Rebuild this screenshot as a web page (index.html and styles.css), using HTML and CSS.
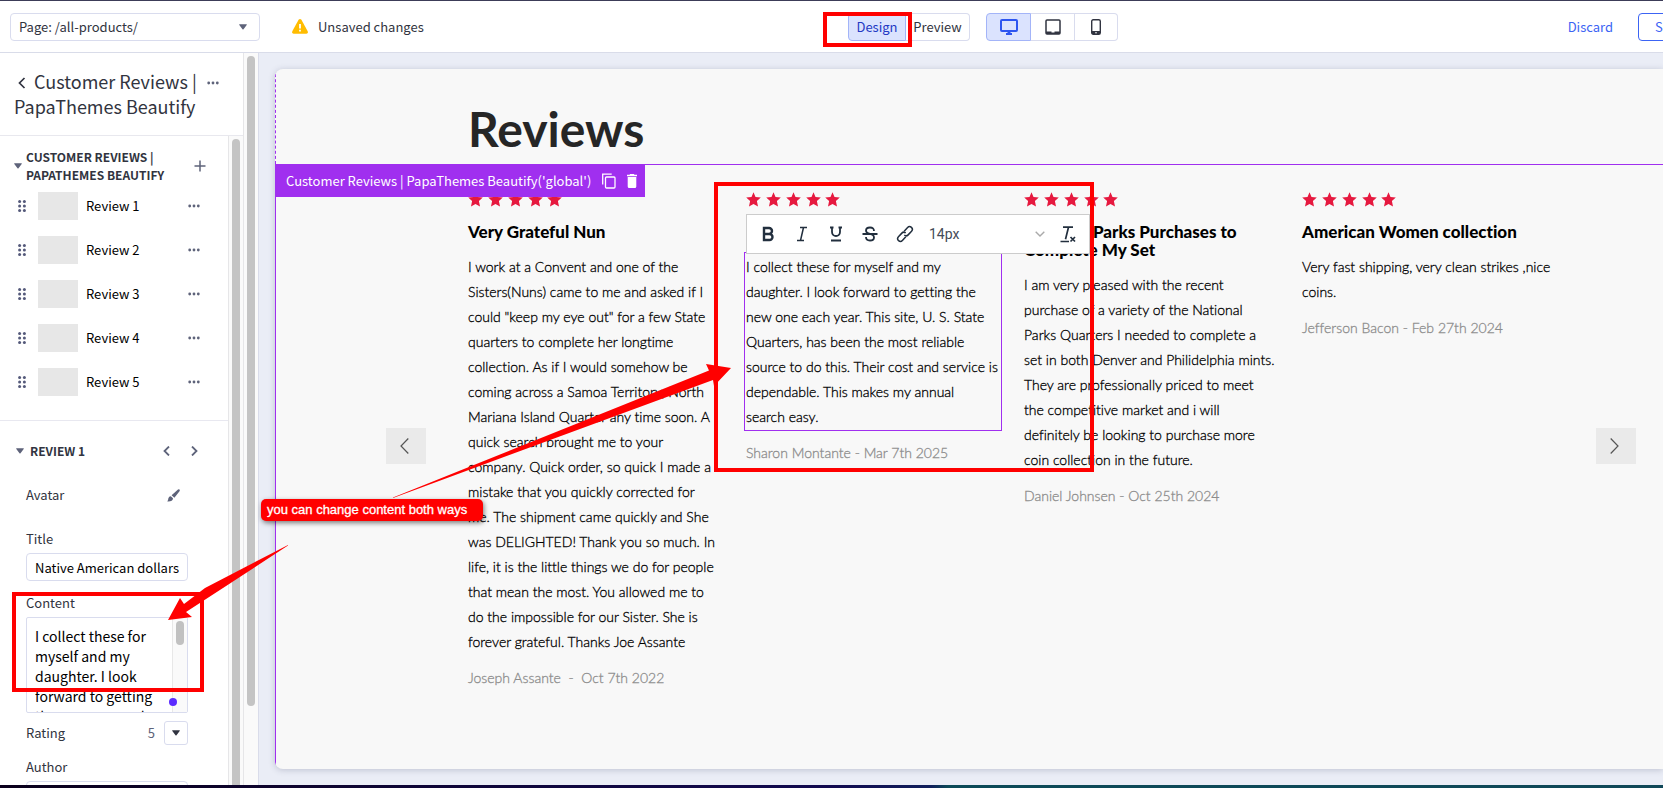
FILE: index.html
```html
<!DOCTYPE html>
<html lang="en">
<head>
<meta charset="utf-8">
<title>Page Builder</title>
<link rel="stylesheet" href="styles.css">
</head>
<body>
<svg class="defs" aria-hidden="true">
  <symbol id="star" viewBox="0 0 15 15"><path d="M7.500 0.300 9.500 5.000 14.800 5.600 10.900 9 12 14.500 7.500 12 3 14.500 4.100 9 .2 5.600 5.500 5z"/></symbol>
  <symbol id="dots" viewBox="0 0 12 4"><circle cx="1.700" cy="2" r="1.400"/><circle cx="6" cy="2" r="1.400"/><circle cx="10.300" cy="2" r="1.400"/></symbol>
  <symbol id="grip" viewBox="0 0 8 12"><circle cx="1.600" cy="1.500" r="1.500"/><circle cx="6.400" cy="1.500" r="1.500"/><circle cx="1.600" cy="6" r="1.500"/><circle cx="6.400" cy="6" r="1.500"/><circle cx="1.600" cy="10.500" r="1.500"/><circle cx="6.400" cy="10.500" r="1.500"/></symbol>
  <symbol id="caret" viewBox="0 0 8 6"><path d="M.4.300h7.200Q8 .6 7.700 1L4.500 5.300Q4 5.800 3.500 5.300L.3 1Q0 .6.400.300z"/></symbol>
  <symbol id="stars" viewBox="0 0 95 15"><use href="#star" width="15" height="15"/><use href="#star" x="20" width="15" height="15"/><use href="#star" x="40" width="15" height="15"/><use href="#star" x="60" width="15" height="15"/><use href="#star" x="79" width="15" height="15"/></symbol>
</svg>

<div class="app">
  <header class="topbar">
    <div class="topbar-left">
      <div class="page-select">
        <select aria-label="Page"><option>Page: /all-products/</option></select>
        <svg class="caret"><use href="#caret"/></svg>
      </div>
      <p class="unsaved">
        <svg width="16" height="15" viewBox="0 0 16 15"><path d="M6.600.8Q8-.8 9.400.8L15.700 12.200Q16.300 14.500 14.400 14.700H1.600Q-.3 14.500.3 12.200z" fill="#ffbc00"/><path d="M7.100 5h1.800v4.500H7.100zM7.100 10.700h1.800v1.700H7.100z" fill="#fff"/></svg>
        Unsaved changes
      </p>
    </div>
    <div class="segmented modes">
      <button class="active">Design</button><button>Preview</button>
    </div>
    <div class="segmented devices">
      <button class="active" aria-label="Desktop"><svg width="18" height="16" viewBox="0 0 18 16"><rect x="1" y="1" width="16" height="11" rx="1" fill="none" stroke="currentColor" stroke-width="2"/><path d="M7.500 12h3v2H12v2H6v-2h1.500z" fill="currentColor"/></svg></button>
      <button aria-label="Tablet"><svg width="16" height="16" viewBox="0 0 16 16"><rect x="1" y="1" width="14" height="14" rx="1" fill="none" stroke="currentColor" stroke-width="1.500"/><path d="M1 12.500h5.500v1h3v-1H15V15H1z" fill="currentColor"/></svg></button>
      <button aria-label="Mobile"><svg width="10" height="16" viewBox="0 0 10 16"><rect x=".7" y=".7" width="8.600" height="14.600" rx="1.500" fill="none" stroke="currentColor" stroke-width="1.400"/><path d="M1 12h8v3H1z" fill="currentColor"/><circle cx="5" cy="13.700" r=".8" fill="#fff"/></svg></button>
    </div>
    <div class="topbar-right">
      <button class="discard">Discard</button>
      <button class="save">Save</button>
    </div>
  </header>

  <div class="workspace">
    <aside class="sidebar">
      <div class="sidebar-body">
        <div class="panel-head">
          <h1><button class="icon-btn back" aria-label="Back"><svg width="8" height="12" viewBox="0 0 8 12"><path d="M6.500 1 1.500 6l5 5" fill="none" stroke="currentColor" stroke-width="1.700"/></svg></button>Customer Reviews |<br>PapaThemes Beautify</h1>
          <button class="icon-btn" aria-label="More"><svg class="dots"><use href="#dots"/></svg></button>
        </div>
        <div class="panel-scroll">
          <div class="panel">
            <section class="list">
              <div class="list-head">
                <svg class="caret"><use href="#caret"/></svg>
                <h2>CUSTOMER REVIEWS |<br>PAPATHEMES BEAUTIFY</h2>
                <button class="icon-btn" aria-label="Add"><svg width="12" height="12" viewBox="0 0 12 12"><path d="M6 .5v11M.5 6h11" stroke="currentColor" stroke-width="1.500"/></svg></button>
              </div>
              <ul>
                <li><svg class="grip"><use href="#grip"/></svg><span class="thumb"></span><span class="name">Review 1</span><button class="icon-btn" aria-label="More"><svg class="dots"><use href="#dots"/></svg></button></li>
                <li><svg class="grip"><use href="#grip"/></svg><span class="thumb"></span><span class="name">Review 2</span><button class="icon-btn" aria-label="More"><svg class="dots"><use href="#dots"/></svg></button></li>
                <li><svg class="grip"><use href="#grip"/></svg><span class="thumb"></span><span class="name">Review 3</span><button class="icon-btn" aria-label="More"><svg class="dots"><use href="#dots"/></svg></button></li>
                <li><svg class="grip"><use href="#grip"/></svg><span class="thumb"></span><span class="name">Review 4</span><button class="icon-btn" aria-label="More"><svg class="dots"><use href="#dots"/></svg></button></li>
                <li><svg class="grip"><use href="#grip"/></svg><span class="thumb"></span><span class="name">Review 5</span><button class="icon-btn" aria-label="More"><svg class="dots"><use href="#dots"/></svg></button></li>
              </ul>
            </section>
            <section class="details">
              <div class="details-head">
                <svg class="caret"><use href="#caret"/></svg>
                <h2>REVIEW 1</h2>
                <button class="icon-btn" aria-label="Previous"><svg width="7" height="10" viewBox="0 0 7 10"><path d="M6 .5 1.500 5 6 9.500" fill="none" stroke="currentColor" stroke-width="1.800"/></svg></button>
                <button class="icon-btn" aria-label="Next"><svg width="7" height="10" viewBox="0 0 7 10"><path d="M1 .5 5.500 5 1 9.500" fill="none" stroke="currentColor" stroke-width="1.800"/></svg></button>
              </div>
              <div class="row avatar">
                <span>Avatar</span>
                <button class="icon-btn" aria-label="Edit avatar"><svg width="13" height="13" viewBox="0 0 13 13"><path d="M11 .4Q13.200-.2 12.700 1.900L7.400 8.700 4.600 6.200zM3.800 7.200 6 9.300Q5.800 12.800.3 12.500 1.300 11 1.300 9.500 1.800 7.200 3.800 7.200z" fill="currentColor"/></svg></button>
              </div>
              <label for="title">Title</label>
              <input id="title" class="field" type="text" value="Native American dollars">
              <label for="content">Content</label>
              <div class="textarea-wrap">
                <textarea id="content" class="field">I collect these for
myself and my
daughter. I look
forward to getting
the new one each
year.</textarea>
                <span class="mini-track"><span></span></span>
                <span class="marker"></span>
              </div>
              <div class="row rating">
                <span>Rating</span><span class="value">5</span>
                <button class="rating-btn" aria-label="Choose rating"><svg class="caret"><use href="#caret"/></svg></button>
              </div>
              <label for="author">Author</label>
              <input id="author" class="field" type="text">
            </section>
          </div>
          <div class="track inner"><span></span></div>
        </div>
      </div>
      <div class="track outer"><span></span></div>
    </aside>

    <main class="canvas">
      <div class="frame">
        <div class="page-heading"><h2>Reviews</h2></div>
        <section class="widget">
          <div class="widget-badge">
            <span>Customer Reviews | PapaThemes Beautify('global')</span>
            <button aria-label="Duplicate"><svg width="14" height="16" viewBox="0 0 14 16"><path d="M.7 11.500V1.200h9" fill="none" stroke="currentColor" stroke-width="1.300"/><rect x="3.500" y="4" width="9.500" height="11" rx="1" fill="none" stroke="currentColor" stroke-width="1.300"/></svg></button>
            <button aria-label="Delete"><svg width="10" height="14" viewBox="0 0 10 14"><path d="M0 .8h2.500L3.200 0h3.600l.7.8H10v1.400H0zM.7 3h8.600v9.500Q9.300 14 7.800 14H2.200Q.7 14 .7 12.500z" fill="currentColor"/></svg></button>
          </div>
          <button class="slide-btn" aria-label="Previous reviews"><svg width="9" height="16" viewBox="0 0 9 16"><path d="M8.300.5 1 8l7.300 7.500" fill="none" stroke="currentColor" stroke-width="1.200"/></svg></button>
          <div class="reviews">
            <article>
              <svg class="stars"><use href="#stars"/></svg>
              <h3>Very Grateful Nun</h3>
              <p>I work at a Convent and one of the<br>Sisters(Nuns) came to me and asked if I<br>could "keep my eye out" for a few State<br>quarters to complete her longtime<br>collection. As if I would somehow be<br>coming across a Samoa Territory, North<br>Mariana Island Quarter any time soon. A<br>quick search brought me to your<br>company. Quick order, so quick I made a<br>mistake that you quickly corrected for<br>me. The shipment came quickly and She<br>was DELIGHTED! Thank you so much. In<br>life, it is the little things we do for people<br>that mean the most. You allowed me to<br>do the impossible for our Sister. She is<br>forever grateful. Thanks Joe Assante</p>
              <p class="by">Joseph Assante &nbsp;-&nbsp; Oct 7th 2022</p>
            </article>
            <article class="editing">
              <svg class="stars"><use href="#stars"/></svg>
              <h3>Native American dollars</h3>
              <div class="toolbar">
                <button aria-label="Bold"><svg width="16" height="16" viewBox="0 0 16 16"><path d="M4 2h5a3 3 0 0 1 0 6H4zM4 8h5.500a3 3 0 0 1 0 6H4z" fill="none" stroke="currentColor" stroke-width="2.400"/></svg></button>
                <button aria-label="Italic"><svg width="16" height="16" viewBox="0 0 16 16"><path d="M6 1.500h7M3 14.500h7M9.500 1.500l-3 13" fill="none" stroke="currentColor" stroke-width="1.500"/></svg></button>
                <button aria-label="Underline"><svg width="16" height="16" viewBox="0 0 16 16"><path d="M2 1.500h3.500M10.500 1.500H14M4 1.500V6a4 4 0 0 0 8 0V1.500M3 14.500h10" fill="none" stroke="currentColor" stroke-width="1.800"/></svg></button>
                <button aria-label="Strikethrough"><svg width="16" height="16" viewBox="0 0 16 16"><path d="M12 5Q12 1.500 8 1.500T4 4.500Q4 7 8 7.800T12 11.500Q12 14.500 8 14.500T4 11M.5 8h15" fill="none" stroke="currentColor" stroke-width="1.800"/></svg></button>
                <button aria-label="Link"><svg width="18" height="18" viewBox="0 0 18 18"><g transform="rotate(-47 9 9)" fill="none" stroke="currentColor" stroke-width="1.500"><path d="M7.500 11.500H2.500a2.700 2.700 0 0 1 0-5.400h5a2.700 2.700 0 0 1 2.700 2.700"/><path d="M10.500 6.500h5a2.700 2.700 0 0 1 0 5.400h-5a2.700 2.700 0 0 1-2.700-2.700"/></g></svg></button>
                <div class="size"><select aria-label="Font size"><option>14px</option></select><svg width="10" height="6" viewBox="0 0 10 6"><path d="m.7.700 4.300 4.300L9.300.7" fill="none" stroke="#aaa" stroke-width="1.400"/></svg></div>
                <button aria-label="Clear formatting"><svg width="16" height="17" viewBox="0 0 16 17"><path d="M3 1.200h10M8.500 1.200l-3 12M.5 15.500H9M10.500 11l4.500 4.500M15 11l-4.500 4.500" fill="none" stroke="currentColor" stroke-width="1.700"/></svg></button>
              </div>
              <p>I collect these for myself and my<br>daughter. I look forward to getting the<br>new one each year. This site, U. S. State<br>Quarters, has been the most reliable<br>source to do this. Their cost and service is<br>dependable. This makes my annual<br>search easy.</p>
              <p class="by">Sharon Montante - Mar 7th 2025</p>
            </article>
            <article>
              <svg class="stars"><use href="#stars"/></svg>
              <h3>National Parks Purchases to<br>Complete My Set</h3>
              <p>I am very pleased with the recent<br>purchase of a variety of the National<br>Parks Quarters I needed to complete a<br>set in both Denver and Philidelphia mints.<br>They are professionally priced to meet<br>the competitive market and i will<br>definitely be looking to purchase more<br>coin collection in the future.</p>
              <p class="by">Daniel Johnsen - Oct 25th 2024</p>
            </article>
            <article>
              <svg class="stars"><use href="#stars"/></svg>
              <h3>American Women collection</h3>
              <p>Very fast shipping, very clean strikes ,nice<br>coins.</p>
              <p class="by">Jefferson Bacon - Feb 27th 2024</p>
            </article>
          </div>
          <button class="slide-btn" aria-label="Next reviews"><svg width="9" height="16" viewBox="0 0 9 16"><path d="M.7.500 8 8 .7 15.500" fill="none" stroke="currentColor" stroke-width="1.200"/></svg></button>
        </section>
      </div>
    </main>
  </div>
  <div class="desktop-edge"></div>

  <svg class="markup" width="1100" height="700" viewBox="0 0 1100 700">
    <g fill="none" stroke="#f00" stroke-width="4">
      <rect x="825" y="14" width="85" height="31"/>
      <rect x="716" y="184" width="376" height="286"/>
      <rect x="14" y="594" width="188" height="96"/>
    </g>
    <g fill="#f00">
      <path d="M393 497.500 709 370.500 706 364 731 368 714 386 713 380 393 498z"/>
      <path d="M288 545 205 588 184 604 180 598 168 620 192 617 186 612 223 588 288 545.500z"/>
    </g>
  </svg>
  <div class="callout">you can change content both ways</div>
</div>
</body>
</html>
```

FILE: styles.css
```css
* { box-sizing: border-box; }
body {
  margin: 0;
  font: 13px/20px "Noto Sans CJK SC", "Noto Sans", sans-serif;
  color: #313440;
}
h1, h2, h3, p, ul { margin: 0; padding: 0; }
button, input, select, textarea { font: inherit; color: inherit; margin: 0; }
button { background: none; border: 0; padding: 0; }
svg { display: block; }
.defs { position: absolute; width: 0; height: 0; }

.app {
  position: relative;
  display: flex;
  flex-direction: column;
  height: 100vh;
  overflow: hidden;
  border-top: 1px solid #3c3c58;
}

/* Top bar */
.topbar {
  display: flex;
  align-items: center;
  height: 52px;
  padding-left: 10px;
  border-bottom: 1px solid #d9dce9;
  background: #fff;
  overflow: hidden;
}
.topbar-left { display: flex; align-items: center; flex: 1; gap: 32px; }
.page-select { display: grid; width: 250px; align-items: center; }
.page-select > * { grid-area: 1 / 1; }
.page-select select {
  appearance: none;
  height: 28px;
  padding: 0 8px;
  border: 1px solid #d9dcee;
  border-radius: 4px;
  background: #fff;
}
.page-select .caret { justify-self: end; margin-right: 13px; }
.caret { width: 8px; height: 6px; fill: #5e637a; flex: none; }
.unsaved { display: flex; align-items: center; gap: 10px; }
.segmented { display: flex; height: 28px; }
.segmented button {
  display: flex;
  align-items: center;
  justify-content: center;
  border: 1px solid #d9dcee;
  border-left-width: 0;
}
.segmented button:first-child { border-radius: 4px 0 0 4px; }
.segmented button:last-child { border-radius: 0 4px 4px 0; }
.segmented .active { background: #dbe3fe; border: 1px solid #a3b4f8; color: #2439c4; }
.modes { margin-right: 16px; }
.modes button { width: 64px; }
.modes .active { width: 58px; }
.devices button { width: 43px; }
.devices button:nth-child(2) { width: 44px; }
.devices .active { width: 45px; color: #2d55f0; }
.topbar-right {
  display: flex;
  align-items: center;
  justify-content: flex-end;
  width: 592px;
  margin-right: -47px;
  gap: 25px;
  color: #3c64f4;
}
.save { width: 72px; height: 28px; border: 1px solid #3c64f4; border-radius: 4px; padding-left: 16px; text-align: left; }

/* Sidebar */
.workspace { display: flex; flex: 1; min-height: 0; }
.sidebar { display: flex; width: 259px; flex: none; background: #fff; border-right: 1px solid #d9dcea; }
.sidebar-body { flex: 1; display: flex; flex-direction: column; min-height: 0; }
.icon-btn { display: flex; color: #5e637a; flex: none; }
.dots { width: 12px; height: 4px; fill: #5e637a; }
.grip { width: 8px; height: 12px; fill: #54597a; }
.panel-head {
  display: flex;
  height: 82px;
  padding: 16px 24px 0 14px;
  justify-content: space-between;
  white-space: nowrap;
}
.panel-head h1 { font-size: 18px; line-height: 25px; font-weight: 400; }
.panel-head > .icon-btn { margin-top: 12px; }
.back { display: inline-flex; margin: 0 8px 0 4px; color: #313440; }
.panel-scroll { display: flex; flex: 1; min-height: 0; border-top: 1px solid #e8e8ee; }
.panel { flex: 1; min-width: 0; overflow: hidden; }
.panel h2 { font-size: 12px; line-height: 18px; font-weight: 700; white-space: nowrap; }
.track { width: 15px; flex: none; border-left: 1px solid #e6e6e8; background: #fafafa; padding: 3px 3px 0; }
.track span { display: block; width: 8px; border-radius: 4px; background: #c4c4c4; }
.track.inner span { height: 100%; border-radius: 4px 4px 0 0; }
.track.outer span { height: 650px; }
.list { height: 285px; padding: 12px 0 0; border-bottom: 1px solid #e8e8f0; }
.list-head { display: flex; align-items: center; gap: 4px; padding: 0 22px 0 14px; height: 36px; }
.list-head h2 { flex: 1; }
ul { list-style: none; }
li { display: flex; align-items: center; height: 44px; padding: 0 28px 0 18px; color: #000; }
li .thumb { width: 40px; height: 28px; margin: 0 8px 0 12px; background: #e7e7e7; }
li .name { flex: 1; }
.details { padding: 20px 40px 0 26px; }
.details-head { display: flex; align-items: center; height: 20px; margin: 0 -10px; gap: 21px; }
.details-head .caret { margin-right: -15px; }
.details-head h2 { flex: 1; }
.details label { display: block; line-height: 20px; }
.row { display: flex; align-items: center; justify-content: space-between; }
.avatar { height: 20px; margin: 24px 0; padding-right: 8px; }
.field { display: block; width: 100%; border: 1px solid #d9dcee; border-radius: 4px; background: #fff; color: #000; padding: 0 8px; outline: 0; }
input.field { height: 28px; margin: 4px 0 12px; }
.textarea-wrap { position: relative; margin: 4px 0 8px; }
textarea.field { height: 96px; padding: 8px 8px 0; font-size: 14px; resize: none; overflow: hidden; white-space: pre; border-radius: 2px; }
.mini-track { position: absolute; top: 1px; right: 1px; bottom: 1px; width: 15px; padding: 3px; border-left: 1px solid #e8e8e8; background: #fafafa; }
.mini-track span { display: block; width: 8px; height: 24px; border-radius: 4px; background: #c1c1c1; }
.marker { position: absolute; right: 11px; bottom: 7px; width: 8px; height: 8px; border-radius: 50%; background: #5b2bff; }
.rating { height: 24px; margin-bottom: 12px; }
.rating .value { margin: 0 9px 0 auto; color: #5e637a; }
.rating-btn { display: flex; align-items: center; justify-content: center; width: 24px; height: 24px; border: 1px solid #d9dcee; border-radius: 3px; }
.rating-btn .caret { fill: #313440; }

/* Canvas */
.canvas { flex: 1; min-width: 0; padding: 16px 0 16px 16px; background: #eaedf6; }
.frame {
  display: flex;
  flex-direction: column;
  height: 100%;
  border-radius: 8px 0 0 8px;
  background: #f8f8f8;
  box-shadow: 0 1px 6px rgba(60, 64, 100, .25);
  overflow: hidden;
  color: #000;
  font-family: Lato, sans-serif;
  font-variant-ligatures: none;
}
.page-heading { height: 95px; padding: 30px 0 0 192px; border-left: 1px dashed #a02fef; }
.page-heading h2 { font-size: 48px; line-height: 60px; font-weight: 700; color: #262626; }
.widget {
  position: relative;
  display: flex;
  align-items: flex-start;
  flex: 1;
  padding: 27px 27px 0 110px;
  border-top: 1px solid #a02fef;
  border-left: 1px solid #a02fef;
}
.widget-badge {
  position: absolute;
  z-index: 1;
  top: 0;
  left: 0;
  display: flex;
  align-items: center;
  height: 32px;
  padding: 0 8px 0 10px;
  gap: 11px;
  background: #a02fef;
  color: #fff;
  font: 13px/20px "Noto Sans CJK SC", "Noto Sans", sans-serif;
  white-space: nowrap;
}
.slide-btn {
  display: flex;
  align-items: center;
  justify-content: center;
  width: 40px;
  height: 36px;
  margin-top: 236px;
  padding-right: 3px;
  flex: none;
  background: #eaeaea;
  color: #555;
}
.reviews { display: grid; grid-template-columns: repeat(4, minmax(0, 1fr)); gap: 24px; flex: 1; margin: 0 40px 0 42px; }
article { position: relative; white-space: nowrap; }
.stars { width: 95px; height: 15px; fill: #e6193f; }
h3 { margin: 16px 0 13px; font-size: 17px; line-height: 18px; font-weight: 900; }
article p { font-size: 14px; line-height: 25px; font-weight: 300; -webkit-text-stroke: 0.3px currentColor; }
article .by { margin-top: 11px; color: #8c8c8c; }
.editing p:not(.by) { outline: 1px solid #a02fef; outline-offset: 1px; }
.toolbar {
  position: absolute;
  z-index: 1;
  top: 22px;
  left: 0;
  display: flex;
  align-items: center;
  gap: 18px;
  width: 344px;
  height: 40px;
  padding: 0 13px;
  border: 1px solid #ccc;
  background: #fff;
  color: #222f3e;
}
.toolbar button { flex: none; }
.size { display: grid; flex: 1; align-items: center; margin: 0 -3px; }
.size > * { grid-area: 1 / 1; }
.size select { appearance: none; border: 0; background: #fff; font: 14px/20px Roboto, sans-serif; color: #444b57; padding: 0; }
.size svg { justify-self: end; }

.desktop-edge { height: 3px; flex: none; background: linear-gradient(90deg, #0a001c, #120a50 50%, #10205c 56%, #0c4a58 57%, #104858); }

/* Markup layer */
.markup { position: absolute; z-index: 3; top: -1px; left: 0; pointer-events: none; }
.callout {
  position: absolute;
  z-index: 4;
  top: 498px;
  left: 261px;
  width: 222px;
  padding: 0 6px;
  border-radius: 5px;
  background: #f00;
  color: #fff;
  box-shadow: 1px 2px 5px rgba(0, 0, 0, .5);
  font: 13px/22px "Liberation Sans", sans-serif;
  -webkit-text-stroke: 0.3px #fff;
  white-space: nowrap;
}
```
